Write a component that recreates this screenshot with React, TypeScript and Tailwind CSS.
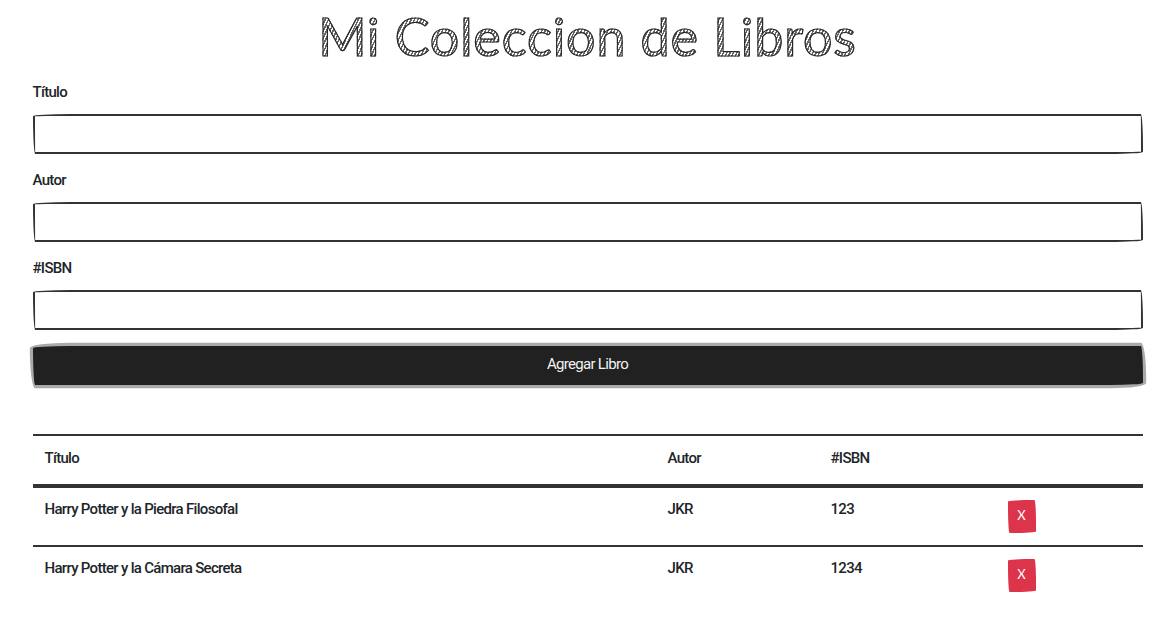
const sketch = "rounded-[255px_15px_225px_15px/15px_225px_15px_255px]";
const body = "font-['Roboto','Lato',sans-serif]";
const text = "text-[15px] font-medium tracking-[-0.7px]";

function Field({ label }: { label: string }) {
  return (
    <div className="mb-[13px] flex flex-col">
      <label className={`mb-[10px] block h-6 pt-px leading-6 text-[#212529] ${text}`}>{label}</label>
      <input type="text" className={`mt-px block h-10 w-full border-2 border-[#333333] bg-white px-3 ${sketch}`} />
    </div>
  );
}

function Row({ title, author, isbn }: { title: string; author: string; isbn: string }) {
  return (
    <tr className="border-t-2 border-[#333333] first:border-t-0">
      <td className={`p-3 align-top leading-[18px] whitespace-nowrap ${text}`}>{title}</td>
      <td className={`p-3 align-top leading-[18px] ${text}`}>{author}</td>
      <td className={`p-3 align-top leading-[18px] ${text}`}>{isbn}</td>
      <td className="p-3 align-top">
        <button className={`flex h-[33px] w-7 items-center justify-center pb-[2px] font-['Lato',sans-serif] text-[13px] font-normal text-white bg-[#dc354b] ${sketch}`}>X</button>
      </td>
    </tr>
  );
}

export default function App() {
  return (
    <div className={`min-h-[626px] bg-white text-[#212529] ${body}`}>
      <div className="mx-auto w-[1110px] pt-[9px]">
        <h1 className="mb-[16px] h-[54px] text-center font-['Lato',sans-serif] text-[52px] leading-[54px] font-normal tracking-[0.9px] text-transparent bg-clip-text bg-[repeating-linear-gradient(115deg,#ffffff_0px,#ffffff_1.5px,#666666_1.5px,#666666_3px)] [-webkit-text-stroke:1.2px_#2a2a2a]">
          Mi Coleccion de Libros
        </h1>
        <form>
          <Field label="Título" />
          <Field label="Autor" />
          <Field label="#ISBN" />
          <button type="button" className={`mt-4 block h-[39px] w-full border-2 border-[#212121] bg-[#212121] pb-[2px] text-[#f2f2f2] shadow-[0_0_0_3.2px_rgba(66,66,66,0.45)] ${text} font-normal ${sketch}`}>
            Agregar Libro
          </button>
        </form>
        <table className="mt-[49px] w-full table-fixed border-collapse">
          <colgroup>
            <col className="w-[623px]" />
            <col className="w-[163px]" />
            <col className="w-[177px]" />
            <col />
          </colgroup>
          <thead>
            <tr className="border-t-2 border-b-4 border-[#333333] text-left">
              <th className={`px-3 pt-[13px] pb-[17px] leading-[18px] ${text}`}>Título</th>
              <th className={`px-3 pt-[13px] pb-[17px] leading-[18px] ${text}`}>Autor</th>
              <th className={`px-3 pt-[13px] pb-[17px] leading-[18px] ${text}`}>#ISBN</th>
              <th className="p-3" />
            </tr>
          </thead>
          <tbody>
            <Row title="Harry Potter y la Piedra Filosofal" author="JKR" isbn="123" />
            <Row title="Harry Potter y la Cámara Secreta" author="JKR" isbn="1234" />
          </tbody>
        </table>
      </div>
    </div>
  );
}
